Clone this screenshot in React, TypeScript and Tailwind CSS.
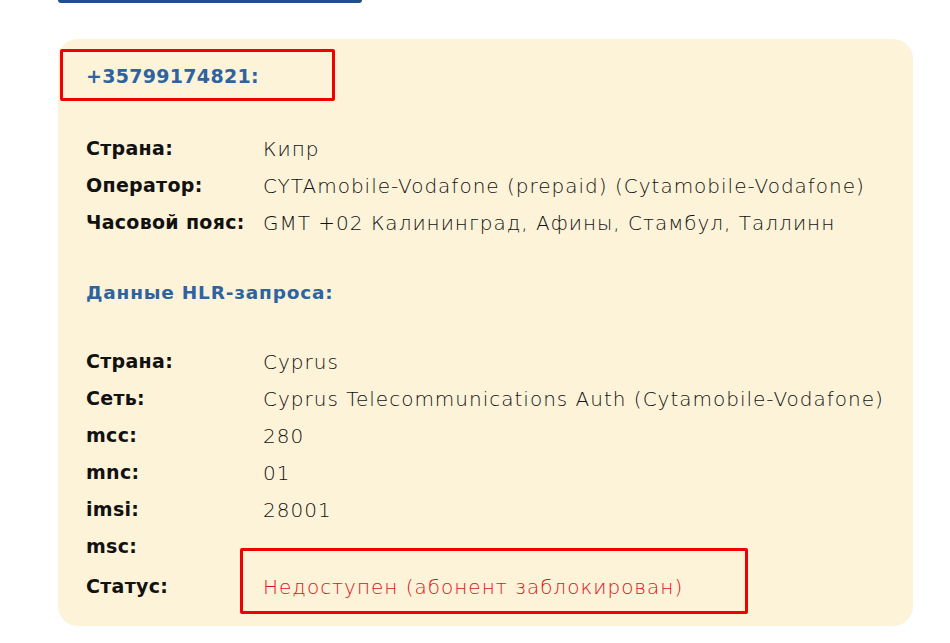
const font = { fontFamily: '"DejaVu Sans", "Liberation Sans", sans-serif' };

type Row = { label: string; value: string };

const general: Row[] = [
  { label: 'Страна:', value: 'Кипр' },
  { label: 'Оператор:', value: 'CYTAmobile-Vodafone (prepaid) (Cytamobile-Vodafone)' },
  { label: 'Часовой пояс:', value: 'GMT +02 Калининград, Афины, Стамбул, Таллинн' },
];

const hlr: Row[] = [
  { label: 'Страна:', value: 'Cyprus' },
  { label: 'Сеть:', value: 'Cyprus Telecommunications Auth (Cytamobile-Vodafone)' },
  { label: 'mcc:', value: '280' },
  { label: 'mnc:', value: '01' },
  { label: 'imsi:', value: '28001' },
  { label: 'msc:', value: '' },
];

function InfoRows({ rows }: { rows: Row[] }) {
  return (
    <div className="flex flex-col">
      {rows.map((r, i) => (
        <div key={i} className="flex h-[37px] items-center">
          <div className="w-[177px] shrink-0 text-[19px] font-bold tracking-[0.3px] text-[#111]">{r.label}</div>
          <div className="text-[20px] font-extralight tracking-[1px] text-[#111]">{r.value}</div>
        </div>
      ))}
    </div>
  );
}

export default function App() {
  return (
    <div className="min-h-[643px] w-[950px] bg-white" style={font}>
      <div className="ml-[58px] h-[3px] w-[304px] rounded-b-[3px] bg-[#1f4f8f]" />
      <div className="relative ml-[58px] mt-[36px] w-[855px] rounded-[20px] bg-[#fdf3d9] pb-[21px] pl-[28px] pt-[19px]">
        <div className="absolute left-[2px] top-[10px] h-[52px] w-[275px] rounded-[2px] border-[3px] border-[#f00000]" />
        <div className="flex h-[37px] items-center text-[19px] font-bold tracking-[0.3px] text-[#2d63a0]">+35799174821:</div>
        <div className="mt-[35px]">
          <InfoRows rows={general} />
        </div>
        <div className="mt-[33px] flex h-[37px] items-center text-[18.5px] font-bold tracking-[0.8px] text-[#2d63a0]">
          Данные HLR-запроса:
        </div>
        <div className="mt-[32px]">
          <InfoRows rows={hlr} />
        </div>
        <div className="relative mt-[3px] flex h-[37px] items-center">
          <div className="w-[177px] shrink-0 text-[19px] font-bold tracking-[0.3px] text-[#111]">Статус:</div>
          <div className="text-[20px] font-extralight tracking-[1px] text-[#e0101a]">Недоступен (абонент заблокирован)</div>
          <div className="absolute left-[154px] top-[-20px] h-[66px] w-[508px] rounded-[2px] border-[3px] border-[#f00000]" />
        </div>
      </div>
    </div>
  );
}
